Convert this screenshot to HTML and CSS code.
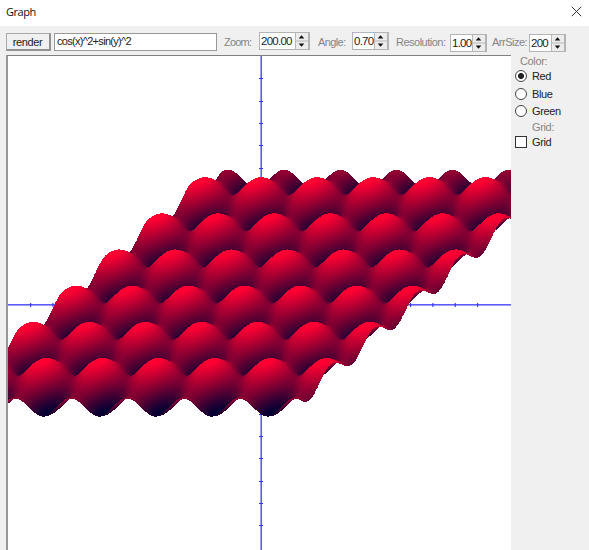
FILE: index.html
```html
<!DOCTYPE html>
<html lang="en">
<head>
<meta charset="utf-8">
<title>Graph</title>
<link rel="stylesheet" href="styles.css">
</head>
<body>
<div class="window">
  <header class="titlebar">
    <span>Graph</span>
    <svg class="close" width="11" height="11" viewBox="0 0 11 11"><path d="M.8.8l9.4 9.4M10.2.8L.8 10.2"/></svg>
  </header>
  <div class="toolbar">
    <button class="render"><span>render</span></button>
    <div class="formula"><span>cos(x)^2+sin(y)^2</span></div>
    <span class="label zoom-label">Zoom:</span>
    <div class="spin zoom"><span>200.00</span><svg width="13" height="16" viewBox="0 0 13 16"><path class="face" d="M0 0h13v16H0z"/><path class="line" d="M0 8h13M.5 0v16"/><path d="M6.5 2.2L9.3 5.6H3.7zM6.5 13.8L9.3 10.4H3.7z"/></svg></div>
    <span class="label angle-label">Angle:</span>
    <div class="spin angle"><span>0.70</span><svg width="13" height="16" viewBox="0 0 13 16"><path class="face" d="M0 0h13v16H0z"/><path class="line" d="M0 8h13M.5 0v16"/><path d="M6.5 2.2L9.3 5.6H3.7zM6.5 13.8L9.3 10.4H3.7z"/></svg></div>
    <span class="label resolution-label">Resolution:</span>
    <div class="spin resolution low"><span>1.00</span><svg width="13" height="16" viewBox="0 0 13 16"><path class="face" d="M0 0h13v16H0z"/><path class="line" d="M0 8h13M.5 0v16"/><path d="M6.5 2.2L9.3 5.6H3.7zM6.5 13.8L9.3 10.4H3.7z"/></svg></div>
    <span class="label size-label">ArrSize:</span>
    <div class="spin size low"><span>200</span><svg width="13" height="16" viewBox="0 0 13 16"><path class="face" d="M0 0h13v16H0z"/><path class="line" d="M0 8h13M.5 0v16"/><path d="M6.5 2.2L9.3 5.6H3.7zM6.5 13.8L9.3 10.4H3.7z"/></svg></div>
  </div>
  <main class="content">
    <div class="plot"><canvas id="plot" width="503" height="494"></canvas></div>
    <aside class="options">
      <div class="caption color-caption"><span>Color:</span></div>
      <div class="option red"><i class="radio checked"></i><span>Red</span></div>
      <div class="option blue"><i class="radio"></i><span>Blue</span></div>
      <div class="option green"><i class="radio"></i><span>Green</span></div>
      <div class="caption grid-caption"><span>Grid:</span></div>
      <div class="option grid"><i class="check"></i><span>Grid</span></div>
    </aside>
  </main>
</div>
<script src="plot.js"></script>
</body>
</html>
```
FILE: styles.css
```css
* { box-sizing: border-box; }
body { margin: 0; background: #fff; font: 11px/14px "Liberation Sans", Arial, sans-serif; letter-spacing: -0.35px; color: #222; overflow: hidden; }
.window { width: 589px; height: 550px; display: flex; flex-direction: column; overflow: hidden; background: #f0f0f0; }
.titlebar { height: 26px; flex: none; display: flex; justify-content: space-between; padding: 4px 7px 0 6px; background: #fff; font: 11px/16px "Open Sans", sans-serif; letter-spacing: -0.45px; color: #111; }
.close { margin-top: 2px; fill: none; stroke: #333; stroke-width: 1; }
.toolbar { height: 29px; flex: none; display: flex; align-items: flex-start; padding: 6px 0 0 6px; }
.toolbar span { white-space: nowrap; }
.render { flex: none; width: 45px; height: 18px; padding: 1px 1px 0 0; border: 1px solid; border-right-width: 2px; border-bottom-width: 2px; border-color: #aaa #919191 #919191 #aaa; background: #f0f0f0; font: inherit; letter-spacing: -0.4px; line-height: 14px; margin-top: 1px; color: #222; }
.formula { flex: none; width: 163px; height: 18px; margin: 1px 0 0 3px; border: 1px solid #999; background: #fff; padding: 0 2px; letter-spacing: -0.7px; line-height: 15px; }
.label { color: #858585; margin-top: 3px; flex: none; }
.zoom-label { width: 35px; margin-left: 7px; letter-spacing: -0.8px; }
.angle-label { width: 34px; margin-left: 8px; letter-spacing: -0.6px; }
.resolution-label { width: 54px; margin-left: 7px; letter-spacing: -0.5px; }
.size-label { width: 37px; margin-left: 5px; letter-spacing: -0.5px; }
.spin { flex: none; height: 18px; display: flex; justify-content: space-between; align-items: center; border: 1px solid #b4b4b4; border-right-width: 2px; background: #fff; color: #222; line-height: 16px; padding-left: 1px; }
.spin.low { margin-top: 2px; }
.spin span { font-size: 11.5px; letter-spacing: -0.75px; }
.zoom { width: 51px; }
.angle { width: 37px; }
.resolution { width: 37px; }
.size { width: 37px; }
.spin svg { display: block; flex: none; fill: #111; }
.spin .face { fill: #ececec; }
.spin .line { stroke: #b8b8b8; fill: none; }
.content { display: flex; flex: 1; }
.plot { flex: none; margin-left: 6px; width: 505px; height: 495px; border-top: 1px solid #808080; border-left: 2px solid #979797; background: #fff; }
.plot canvas { display: block; }
.options { width: 70px; padding-left: 4px; }
.caption { color: #858585; height: 14px; }
.color-caption { padding-left: 5px; height: 13px; margin-top: -1px; }
.grid-caption { padding-left: 17px; height: 14px; margin-top: 1px; }
.option { display: flex; align-items: center; gap: 5px; height: 17px; }
.red { height: 18px; }
.blue { height: 17px; }
.grid { height: 16px; }
.radio { width: 12px; height: 12px; border: 1px solid #444; border-radius: 50%; background: #fff; }
.checked { background: radial-gradient(circle, #222 0 2.6px, #fff 3.4px); }
.check { width: 12px; height: 12px; border: 1px solid #333; background: #fff; }
```
FILE: plot.js
```js
const canvas = document.getElementById('plot');
const ctx = canvas.getContext('2d');
const W = canvas.width, H = canvas.height;
const originX = 253.2, originY = 249.2, scale = 17.86, angle = 0.7;

// Axes
ctx.fillStyle = '#5c5cff';
ctx.fillRect(252.4, 0, 1.6, H);
ctx.fillRect(0, 248, W, 1.6);
ctx.fillStyle = '#3232ff';
for (let k = 1; k <= 21; k++) {
  ctx.fillRect(22.35 * k - 0.3, 247, 1.1, 4);
  ctx.fillRect(251, Math.round(22.35 * k), 4, 1);
}

// Oblique projection, each pixel column swept from back to front
const f = (x, y) => Math.cos(x) ** 2 + Math.sin(y) ** 2;
const min = -9.9, max = 9.8, step = 0.02;
const cos = Math.cos(angle), sin = Math.sin(angle);
for (let px = 0; px < W; px++) {
  let prev = null;
  for (let y = min; y <= max; y += step) {
    const x = (px + 0.5 - originX) / scale + cos * y;
    if (x < min || x > 9.9) { prev = null; continue; }
    const z = f(x, y);
    const py = Math.round(originY + scale * (sin * y - z));
    const a = prev === null ? py : Math.min(prev, py);
    const b = prev === null ? py : Math.max(prev, py);
    ctx.fillStyle = `rgb(${Math.min(255, Math.round(z * 132))},0,50)`;
    ctx.fillRect(px, a, 1, b - a + 1);
    prev = py;
  }
}
```
